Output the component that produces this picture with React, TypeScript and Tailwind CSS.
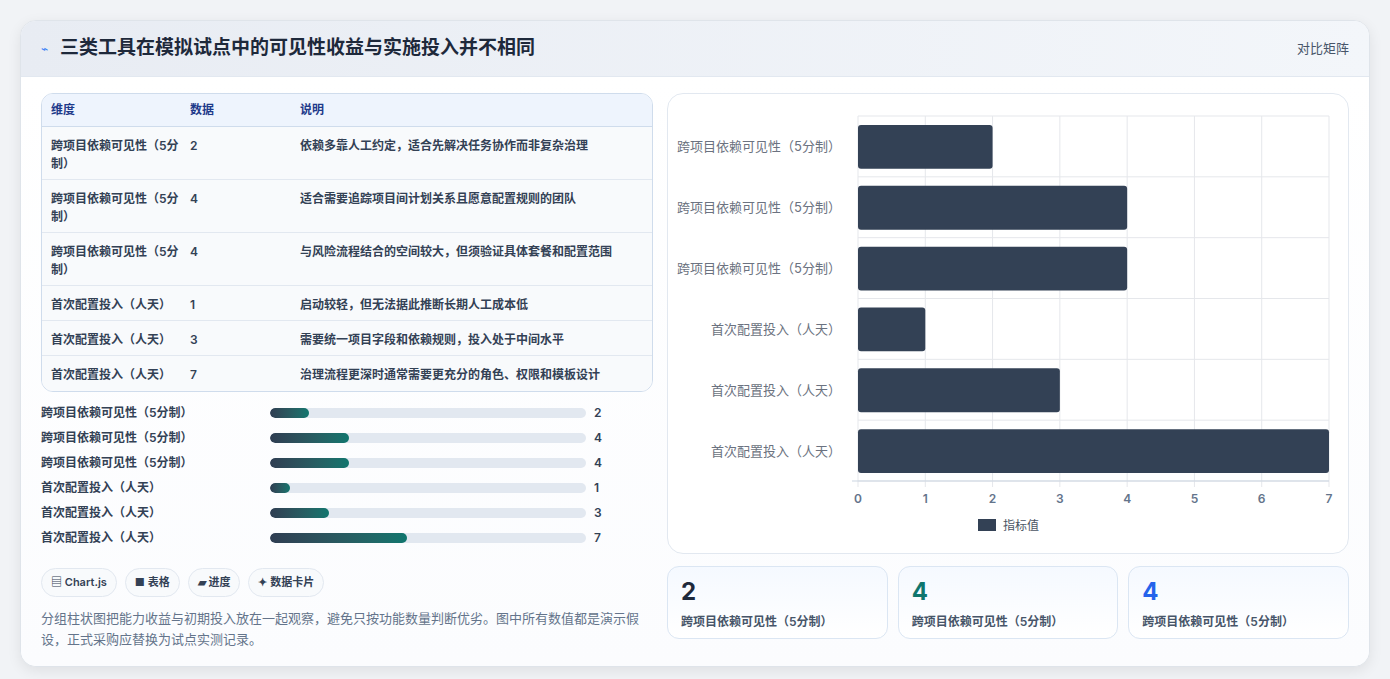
import React from "react";

const rows = [
  ["跨项目依赖可见性（5分制）", 2, "依赖多靠人工约定，适合先解决任务协作而非复杂治理"],
  ["跨项目依赖可见性（5分制）", 4, "适合需要追踪项目间计划关系且愿意配置规则的团队"],
  ["跨项目依赖可见性（5分制）", 4, "与风险流程结合的空间较大，但须验证具体套餐和配置范围"],
  ["首次配置投入（人天）", 1, "启动较轻，但无法据此推断长期人工成本低"],
  ["首次配置投入（人天）", 3, "需要统一项目字段和依赖规则，投入处于中间水平"],
  ["首次配置投入（人天）", 7, "治理流程更深时通常需要更充分的角色、权限和模板设计"],
] as const;

function Chart() {
  const L = 190, T = 22, R = 661, B = 387;
  const sx = (R - L) / 7;
  const rh = (B - T) / 6;
  return (
    <svg width="680" height="460" className="block">
      {[0, 1, 2, 3, 4, 5, 6, 7].map((i) => (
        <g key={i}>
          <line x1={L + i * sx} x2={L + i * sx} y1={T} y2={B + 6} stroke="#e5e7eb" />
          <text x={L + i * sx} y={409} textAnchor="middle" fontSize="12" fill="#64748b" fontWeight="600">{i}</text>
        </g>
      ))}
      {[0, 1, 2, 3, 4, 5, 6].map((i) => (
        <line key={i} x1={L} x2={R} y1={T + i * rh} y2={T + i * rh} stroke="#e5e7eb" />
      ))}
      <line x1={L - 6} x2={R} y1={B} y2={B} stroke="#cbd5e1" />
      {rows.map((r, i) => (
        <g key={i}>
          <rect x={L} y={T + i * rh + 9} width={r[1] * sx} height={rh - 17} rx="3" fill="#334155" />
          <text x={L - 17} y={T + i * rh + rh / 2 + 5} textAnchor="end" fontSize="13" fill="#6b7280">{r[0]}</text>
        </g>
      ))}
      <rect x="310" y="425" width="18" height="12" fill="#334155" />
      <text x="335" y="436" fontSize="12" fill="#4b5563">指标值</text>
    </svg>
  );
}

export default function App() {
  return (
    <div className="min-h-[679px] bg-[#f1f3f6] p-5" style={{ fontFamily: "Inter, 'Noto Sans CJK SC', sans-serif" }}>
      <div className="rounded-2xl bg-white border border-[#dfe4ea] shadow-[0_4px_14px_rgba(0,0,0,0.08)] overflow-hidden">
        <div className="h-[56px] flex items-center justify-between px-5 bg-gradient-to-r from-[#e8ecf3] to-[#f3f6fa] border-b border-[#e2e8f0]">
          <div className="flex items-center gap-3">
            <span className="text-[#3b82f6] text-xs">⌁</span>
            <h1 className="text-[19px] font-bold text-[#1e293b]">三类工具在模拟试点中的可见性收益与实施投入并不相同</h1>
          </div>
          <span className="text-[13px] text-[#475569]">对比矩阵</span>
        </div>
        <div className="flex gap-[14px] px-5 pt-4 pb-4 bg-gradient-to-b from-white to-[#fbfcfe]">
          <div className="w-[616px] flex flex-col">
            <div className="rounded-xl border border-[#cfdcec] overflow-hidden text-[12px] font-semibold text-[#334155]">
              <div className="flex h-[33px] items-center bg-[#eef4fd] text-[#1e3a8a] border-b border-[#cfdcec]">
                <div className="w-[148px] pl-[9px]">维度</div>
                <div className="w-[110px]">数据</div>
                <div>说明</div>
              </div>
              {rows.map((r, i) => (
                <div key={i} className={`flex pt-[10px] bg-[#f8fafc] ${i < 3 ? "h-[53px]" : "h-[35px]"} ${i < 5 ? "border-b border-[#e2e8f0]" : ""}`}>
                  <div className="w-[148px] pl-[9px] pr-2 leading-[18px]">{r[0]}</div>
                  <div className="w-[110px] leading-[18px]">{r[1]}</div>
                  <div className="leading-[18px]">{r[2]}</div>
                </div>
              ))}
            </div>
            <div className="flex flex-col gap-[7px] mt-[12px] text-[12px] font-semibold text-[#334155]">
              {rows.map((r, i) => (
                <div key={i} className="flex items-center h-[18px]">
                  <div className="w-[229px] pl-[-1px]">{r[0]}</div>
                  <div className="w-[316px] h-[10px] rounded-full bg-[#e2e8f0] overflow-hidden">
                    <div className="h-full rounded-full bg-gradient-to-r from-[#2f3e52] to-[#0f766e]" style={{ width: `${(r[1] / 7) * 43.5}%` }} />
                  </div>
                  <div className="ml-2">{r[1]}</div>
                </div>
              ))}
            </div>
            <div className="flex gap-2 mt-[21px] text-[11px] font-semibold text-[#334155]">
              {["▤ Chart.js", "■ 表格", "▰ 进度", "✦ 数据卡片"].map((t) => (
                <span key={t} className="h-[29px] px-[9px] flex items-center rounded-full border border-[#e2e8f0] bg-[#f8fafc]">{t}</span>
              ))}
            </div>
            <p className="mt-[11px] text-[13px] leading-[21px] text-[#64748b] pr-2">分组柱状图把能力收益与初期投入放在一起观察，避免只按功能数量判断优劣。图中所有数值都是演示假设，正式采购应替换为试点实测记录。</p>
          </div>
          <div className="flex-1 flex flex-col gap-3">
            <div className="h-[461px] rounded-2xl border border-[#e2e8f0] bg-white overflow-hidden"><Chart /></div>
            <div className="grid grid-cols-3 gap-[10px]">
              {[["2", "text-[#1e293b]"], ["4", "text-[#0f766e]"], ["4", "text-[#2563eb]"]].map(([v, c], i) => (
                <div key={i} className="h-[73px] rounded-xl border border-[#dbe6f3] bg-gradient-to-b from-[#f5f9ff] to-white px-[13px] pt-[10px]">
                  <div className={`text-[24px] font-bold leading-[30px] ${c}`}>{v}</div>
                  <div className="text-[12px] font-semibold text-[#475569] mt-[6px]">跨项目依赖可见性（5分制）</div>
                </div>
              ))}
            </div>
          </div>
        </div>
      </div>
    </div>
  );
}
